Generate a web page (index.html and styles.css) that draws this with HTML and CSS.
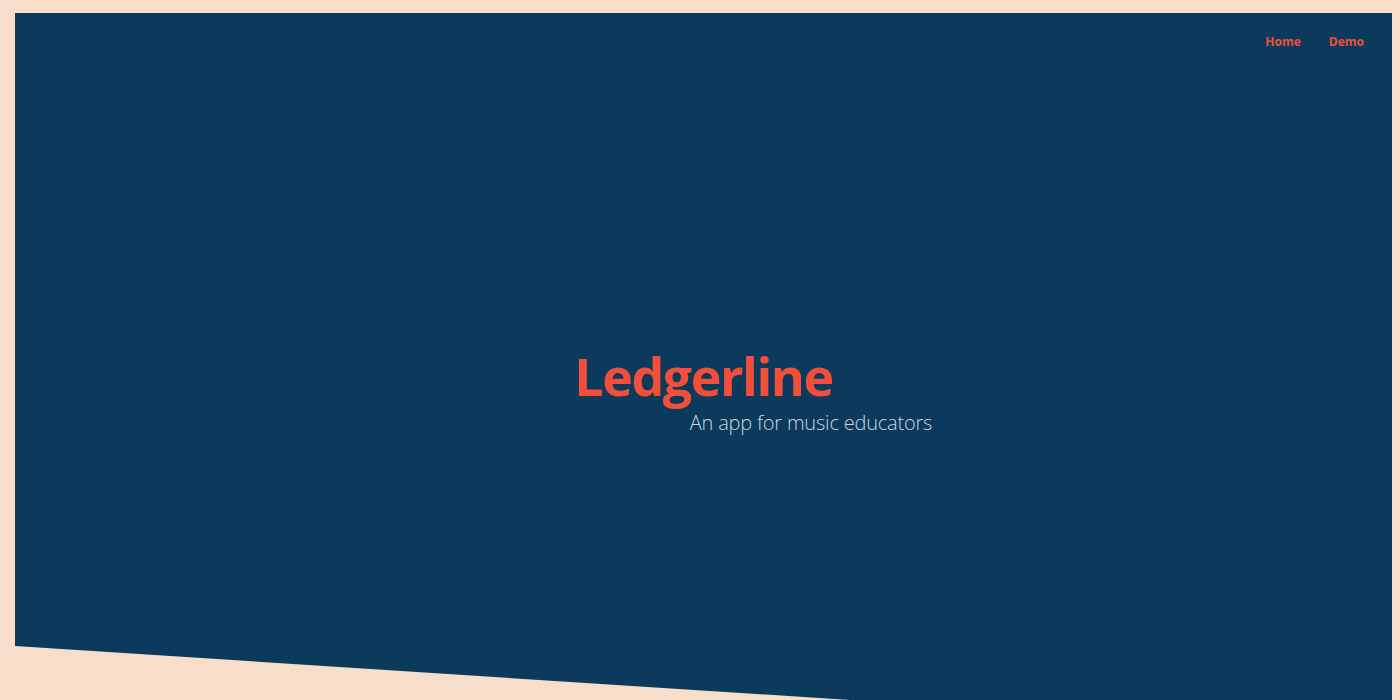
FILE: index.html
```html
<!DOCTYPE html>
<html>
<head>
<meta charset="utf-8">
<link rel="stylesheet" href="styles.css">
<title>Ledgerline</title>
</head>
<body>
<div class="page">
  <section class="hero">
    <nav class="nav">
      <a href="#" class="nav-link">Home</a>
      <a href="#" class="nav-link">Demo</a>
    </nav>
    <div class="intro">
      <h1 class="title">Ledgerline</h1>
      <p class="subtitle">An app for music educators</p>
    </div>
  </section>
</div>
</body>
</html>
```
FILE: styles.css
```css
html, body {
  margin: 0;
  padding: 0;
  height: 100%;
  overflow: hidden;
}
body {
  background: #f7decb;
  font-family: "Open Sans", "Liberation Sans", sans-serif;
}
.page {
  padding: 13px 8px 0 15px;
  height: 100%;
  box-sizing: border-box;
}
.hero {
  background: #0b3a5d;
  height: 100%;
  display: flex;
  flex-direction: column;
  clip-path: polygon(0 0, 100% 0, 100% 100%, 835px 100%, 0 633px);
}
.nav {
  display: flex;
  justify-content: flex-end;
  gap: 28px;
  padding: 20px 28px 0 0;
}
.nav-link {
  color: #f24f3b;
  text-decoration: none;
  font-weight: 700;
  font-size: 12px;
  line-height: 18px;
}
.intro {
  display: flex;
  flex-direction: column;
  align-items: center;
  margin-top: 293px;
}
.title {
  margin: 0;
  color: #f24f3b;
  font-size: 52px;
  font-weight: 700;
  line-height: 64px;
  letter-spacing: -1.5px;
}
.subtitle {
  margin: 1px 0 0 215px;
  color: #c9d4dd;
  font-size: 20px;
  font-weight: 300;
  line-height: 28px;
  letter-spacing: -0.2px;
}
```
